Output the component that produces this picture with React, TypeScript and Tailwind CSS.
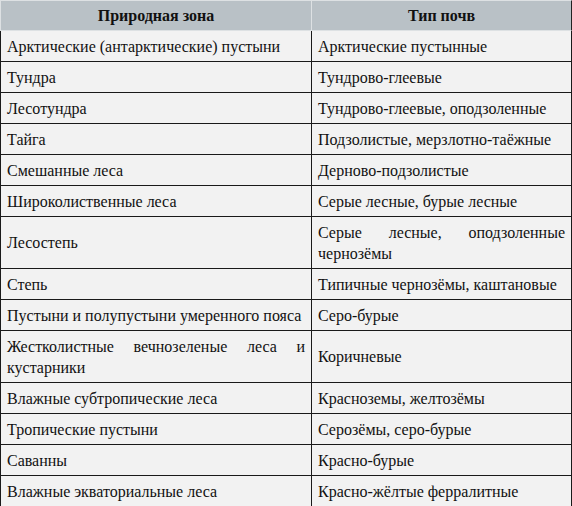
const rows: { zone: string; soil: string; justify?: 'zone' | 'soil' }[] = [
  { zone: 'Арктические (антарктические) пустыни', soil: 'Арктические пустынные' },
  { zone: 'Тундра', soil: 'Тундрово-глеевые' },
  { zone: 'Лесотундра', soil: 'Тундрово-глеевые, оподзоленные' },
  { zone: 'Тайга', soil: 'Подзолистые, мерзлотно-таёжные' },
  { zone: 'Смешанные леса', soil: 'Дерново-подзолистые' },
  { zone: 'Широколиственные леса', soil: 'Серые лесные, бурые лесные' },
  { zone: 'Лесостепь', soil: 'Серые лесные, оподзоленные чернозёмы', justify: 'soil' },
  { zone: 'Степь', soil: 'Типичные чернозёмы, каштановые' },
  { zone: 'Пустыни и полупустыни умеренного пояса', soil: 'Серо-бурые' },
  { zone: 'Жестколистные вечнозеленые леса и кустарники', soil: 'Коричневые', justify: 'zone' },
  { zone: 'Влажные субтропические леса', soil: 'Красноземы, желтозёмы' },
  { zone: 'Тропические пустыни', soil: 'Серозёмы, серо-бурые' },
  { zone: 'Саванны', soil: 'Красно-бурые' },
  { zone: 'Влажные экваториальные леса', soil: 'Красно-жёлтые ферралитные' },
];

export default function App() {
  return (
    <div className="w-[572px] h-[506px] overflow-hidden bg-white">
      <div className="grid grid-cols-[312px_260px] [font-family:'Liberation_Serif',serif] text-[16px] leading-[21px] text-[#111]">
        <div className="h-[31px] flex items-center justify-center bg-[#b9c1c6] border-t border-l border-r border-b border-[#dde1e3] font-bold">
          Природная зона
        </div>
        <div className="h-[31px] flex items-center justify-center bg-[#b9c1c6] border-t border-r border-b border-t-[#dde1e3] border-b-[#dde1e3] border-r-[#222] font-bold">
          Тип почв
        </div>
        {rows.map((r) => (
          <>
            <div
              key={r.zone + '-z'}
              className={`flex items-center bg-[#f2f2f2] border-l border-r border-b border-[#1a1a1a] px-[6px] py-[4.5px] ${
                r.justify === 'zone' ? 'text-justify [text-align-last:left]' : ''
              }`}
            >
              <span className="block w-full">{r.zone}</span>
            </div>
            <div
              key={r.zone + '-s'}
              className={`flex items-center bg-[#f2f2f2] border-r border-b border-[#1a1a1a] px-[6px] py-[4.5px] ${
                r.justify === 'soil' ? 'text-justify [text-align-last:left]' : ''
              }`}
            >
              <span className="block w-full">{r.soil}</span>
            </div>
          </>
        ))}
      </div>
    </div>
  );
}
